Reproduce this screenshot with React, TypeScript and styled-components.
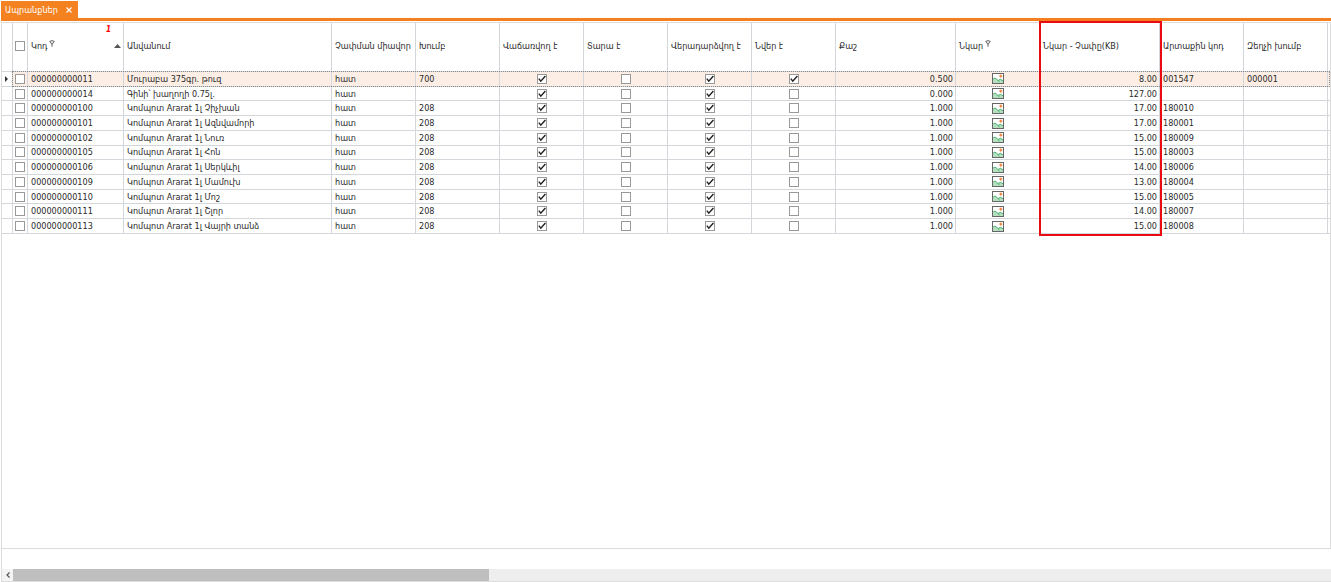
import React from "react";
import styled, { createGlobalStyle, css } from "styled-components";

const GlobalStyle = createGlobalStyle`
  * { box-sizing: border-box; }
  html, body { margin: 0; background: #fff; }
  body, button, input, table {
    font-family: "DejaVu Sans Condensed", "DejaVu Sans", sans-serif;
    font-size: 9px;
    line-height: 12px;
    color: #2a2a2a;
  }
`;

const line = "#d3d7dc";

const Page = styled.div`
  display: flex;
  flex-direction: column;
  min-height: 100vh;
  padding: 1px 0 0 1px;
`;

const TabBar = styled.div`
  display: flex;
  border-bottom: 3px solid #f57e1e;
`;

const Tab = styled.div`
  display: flex;
  align-items: center;
  gap: 8px;
  height: 17px;
  padding: 0 6px 0 4px;
  background: #f58220;
  color: #fff;
`;

const TabClose = styled.button`
  display: flex;
  padding: 0;
  border: 0;
  background: none;
  color: #fff;
`;

const Grid = styled.main`
  flex: 1;
  margin-top: 1px;
  border: 1px solid #dcdcdc;
`;

const TableArea = styled.div`
  position: relative;
`;

const Table = styled.table`
  width: 100%;
  height: 211px;
  table-layout: fixed;
  border-collapse: separate;
  border-spacing: 0;
`;

const HeadCell = styled.th`
  position: relative;
  height: 49px;
  padding: 0 3px 2px;
  border-right: 1px solid ${line};
  border-bottom: 1px solid ${line};
  font-weight: normal;
  text-align: left;
  white-space: nowrap;
  &:nth-child(2) { padding-left: 2px; }
  &:last-child { border-right: 0; }
`;

const HeadLabel = styled.span`
  display: flex;
  align-items: flex-start;
  gap: 2px;
`;

const SortOrder = styled.span`
  position: absolute;
  top: 1px;
  right: 12px;
  color: #f00;
  font-size: 8px;
  font-style: italic;
  font-weight: bold;
`;

const SortArrow = styled.svg`
  position: absolute;
  top: 21px;
  right: 2px;
`;

const Cell = styled.td<{ $align?: "right" }>`
  padding: 0 2px 0 3px;
  border-right: 1px solid ${line};
  border-bottom: 1px solid ${line};
  text-align: ${(p) => p.$align ?? "left"};
  white-space: nowrap;
  &:nth-child(2) { padding-left: 2px; }
  &:last-child { border-right: 0; }
`;

const Row = styled.tr<{ $focused: boolean }>`
  ${(p) =>
    p.$focused &&
    css`
      ${Cell}:not(:first-child) {
        background: #fceee5;
      }
    `}
`;

const FocusLine = styled.div`
  position: absolute;
  top: 48px;
  left: 10px;
  right: 0;
  height: 16px;
  border: 1px dotted #8a8a8a;
  pointer-events: none;
`;

const Frame = styled.div`
  position: absolute;
  top: -2px;
  bottom: -2px;
  right: 168px;
  width: 123px;
  border: 2px solid #ea0a12;
  pointer-events: none;
`;

const CheckBox = styled.span`
  display: grid;
  width: 10px;
  height: 10px;
  margin: 0 auto;
  > * { grid-area: 1 / 1; }
  > svg { pointer-events: none; }
`;

const CheckInput = styled.input`
  appearance: none;
  width: 10px;
  height: 10px;
  margin: 0;
  border: 1px solid #999;
  background: #fff;
`;

const Picture = styled.svg`
  display: block;
  margin: 0 auto;
`;

const Footer = styled.div`
  height: 20px;
  border-left: 1px solid #dcdcdc;
`;

const ScrollBar = styled.div`
  display: flex;
  height: 13px;
  border: solid #dcdcdc;
  border-width: 0 0 1px 1px;
  background: #eee;
`;

const ScrollButton = styled.button`
  display: grid;
  place-items: center;
  width: 11px;
  padding: 0;
  border: 0;
  background: #f4f4f4;
`;

const ScrollTrack = styled.div`
  flex: 1;
`;

const ScrollThumb = styled.div`
  width: 36.15%;
  height: 100%;
  background: #bfbfbf;
`;

function Check({ on, label }: { on: boolean; label: string }) {
  return (
    <CheckBox>
      <CheckInput type="checkbox" defaultChecked={on} aria-label={label} />
      {on && (
        <svg width="10" height="10" viewBox="0 0 10 10">
          <path d="M1.8 4.6 L3.8 7.2 L8.4 2" fill="none" stroke="#222" strokeWidth="1.4" />
        </svg>
      )}
    </CheckBox>
  );
}

function PictureIcon() {
  return (
    <Picture width="12" height="11" viewBox="0 0 12 11" role="img" aria-label="Նկար">
      <rect x="0.5" y="0.5" width="11" height="10" fill="#fff" stroke="#666" />
      <path d="M1 6.5 Q3 4.5 5 6.5 L6.5 7.5 L8.5 6 L11 8 V10 H1Z" fill="#b4e0c0" />
      <path d="M1 6 Q3 4.2 4.6 6.2 L7.5 9 M6.2 7.4 Q8.5 5 11 7.8" fill="none" stroke="#3aa564" strokeWidth="0.9" />
      <path d="M8.8 1.2 V5 M6.9 3.1 H10.7" stroke="#f6b184" strokeWidth="1" />
      <circle cx="8.8" cy="3.1" r="1.2" fill="#ef8540" />
    </Picture>
  );
}

function FilterPin() {
  return (
    <svg width="6" height="7" viewBox="0 0 6 7">
      <path d="M0.6 1.4 Q3 -0.4 5.4 1.4 L3.6 3.8 H2.4Z" fill="#ddd" stroke="#555" strokeWidth="0.8" />
      <path d="M3 3.8 V6.6" stroke="#555" strokeWidth="1" />
    </svg>
  );
}

const columns: { title: string; width?: number; filtered?: boolean; sorted?: boolean }[] = [
  { title: "Կոդ", width: 96, filtered: true, sorted: true },
  { title: "Անվանում" },
  { title: "Չափման միավոր", width: 84 },
  { title: "Խումբ", width: 84 },
  { title: "Վաճառվող է", width: 84 },
  { title: "Տարա է", width: 84 },
  { title: "Վերադարձվող է", width: 84 },
  { title: "Նվեր է", width: 84 },
  { title: "Քաշ", width: 120 },
  { title: "Նկար", width: 84, filtered: true },
  { title: "Նկար - Չափը(KB)", width: 120 },
  { title: "Արտաքին կոդ", width: 84 },
  { title: "Զեղչի խումբ", width: 84 },
];

type Item = [string, string, string, boolean, string, string, string, string];

const items: Item[] = [
  ["000000000011", "Մուրաբա 375գր. թուզ", "700", true, "0.500", "8.00", "001547", "000001"],
  ["000000000014", "Գինի՝ խաղողի 0.75լ.", "", false, "0.000", "127.00", "", ""],
  ["000000000100", "Կոմպոտ Ararat 1լ Չիչխան", "208", false, "1.000", "17.00", "180010", ""],
  ["000000000101", "Կոմպոտ Ararat 1լ Ազնվամորի", "208", false, "1.000", "17.00", "180001", ""],
  ["000000000102", "Կոմպոտ Ararat 1լ Նուռ", "208", false, "1.000", "15.00", "180009", ""],
  ["000000000105", "Կոմպոտ Ararat 1լ Հոն", "208", false, "1.000", "15.00", "180003", ""],
  ["000000000106", "Կոմպոտ Ararat 1լ Սերկևիլ", "208", false, "1.000", "14.00", "180006", ""],
  ["000000000109", "Կոմպոտ Ararat 1լ Մամուխ", "208", false, "1.000", "13.00", "180004", ""],
  ["000000000110", "Կոմպոտ Ararat 1լ Մոշ", "208", false, "1.000", "15.00", "180005", ""],
  ["000000000111", "Կոմպոտ Ararat 1լ Շլոր", "208", false, "1.000", "14.00", "180007", ""],
  ["000000000113", "Կոմպոտ Ararat 1լ Վայրի տանձ", "208", false, "1.000", "15.00", "180008", ""],
];

export default function App() {
  return (
    <Page>
      <GlobalStyle />
      <TabBar>
        <Tab>
          Ապրանքներ
          <TabClose aria-label="Փակել">
            <svg width="6" height="6" viewBox="0 0 6 6">
              <path d="M0.5 0.5 L5.5 5.5 M5.5 0.5 L0.5 5.5" stroke="currentColor" strokeWidth="1.1" />
            </svg>
          </TabClose>
        </Tab>
      </TabBar>
      <Grid>
        <TableArea>
          <Table>
            <colgroup>
              <col width={11} />
              <col width={15} />
              {columns.map((c) => (
                <col key={c.title} width={c.width} />
              ))}
              <col width={2} />
            </colgroup>
            <thead>
              <tr>
                <HeadCell />
                <HeadCell>
                  <Check on={false} label="Նշել բոլորը" />
                </HeadCell>
                {columns.map((c) => (
                  <HeadCell key={c.title}>
                    <HeadLabel>
                      {c.title}
                      {c.filtered && <FilterPin />}
                    </HeadLabel>
                    {c.sorted && (
                      <>
                        <SortOrder>1</SortOrder>
                        <SortArrow width="7" height="4" viewBox="0 0 7 4">
                          <path d="M0 4 L3.5 0 L7 4Z" fill="#555" />
                        </SortArrow>
                      </>
                    )}
                  </HeadCell>
                ))}
                <HeadCell />
              </tr>
            </thead>
            <tbody>
              {items.map(([code, name, group, gift, weight, size, ext, discount], i) => (
                <Row key={code} $focused={i === 0}>
                  <Cell>
                    {i === 0 && (
                      <svg width="3" height="6" viewBox="0 0 3 6">
                        <path d="M0 0 L3 3 L0 6Z" fill="#333" />
                      </svg>
                    )}
                  </Cell>
                  <Cell>
                    <Check on={false} label={code} />
                  </Cell>
                  <Cell>{code}</Cell>
                  <Cell>{name}</Cell>
                  <Cell>հատ</Cell>
                  <Cell>{group}</Cell>
                  <Cell><Check on label="Վաճառվող է" /></Cell>
                  <Cell><Check on={false} label="Տարա է" /></Cell>
                  <Cell><Check on label="Վերադարձվող է" /></Cell>
                  <Cell><Check on={gift} label="Նվեր է" /></Cell>
                  <Cell $align="right">{weight}</Cell>
                  <Cell><PictureIcon /></Cell>
                  <Cell $align="right">{size}</Cell>
                  <Cell>{ext}</Cell>
                  <Cell>{discount}</Cell>
                  <Cell />
                </Row>
              ))}
            </tbody>
          </Table>
          <FocusLine />
          <Frame />
        </TableArea>
      </Grid>
      <Footer />
      <ScrollBar>
        <ScrollButton aria-label="Ձախ">
          <svg width="4" height="6" viewBox="0 0 4 6">
            <path d="M3.5 0.5 L1 3 L3.5 5.5" fill="none" stroke="#555" strokeWidth="1.2" />
          </svg>
        </ScrollButton>
        <ScrollTrack>
          <ScrollThumb />
        </ScrollTrack>
      </ScrollBar>
    </Page>
  );
}
